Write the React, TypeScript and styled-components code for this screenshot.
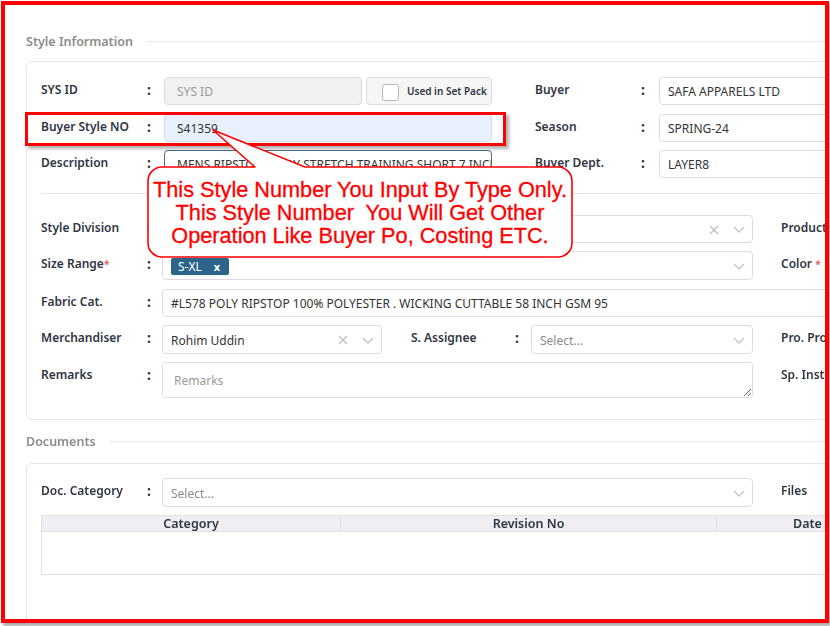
import React from "react";
import styled, { createGlobalStyle } from "styled-components";

const GlobalStyle = createGlobalStyle`
  html, body { margin: 0; padding: 0; background: #fff; }
  body { font-family: "Noto Sans", "Open Sans", sans-serif; color: #2f3542; }
  * { box-sizing: border-box; }
`;

const Screen = styled.div`
  width: 830px;
  height: 626px;
  padding: 1px 0 0 1px;
  background: #fff;
  overflow: hidden;
`;

const Frame = styled.div`
  position: relative;
  width: 828px;
  height: 622px;
  border: 4px solid #ff0000;
  box-shadow: 2px 3px 3px rgba(0, 0, 0, 0.35);
  overflow: hidden;
  background: #fff;
`;

const Content = styled.div`
  width: 1100px;
  padding: 27px 0 0 21px;
`;

const Legend = styled.div<{ $mt?: number }>`
  display: flex;
  align-items: center;
  gap: 14px;
  height: 18px;
  margin-top: ${(p) => p.$mt ?? 0}px;
  font-size: 12.5px;
  font-weight: 600;
  color: #8b8b8b;
  &::after {
    content: "";
    flex: 1;
    height: 1px;
    background: #e9e9e9;
  }
`;

const Card = styled.div<{ $mt: number; $pt: number; $pb: number }>`
  margin-top: ${(p) => p.$mt}px;
  border: 1px solid #e4e4e4;
  border-radius: 6px;
  padding: ${(p) => p.$pt}px 0 ${(p) => p.$pb}px 14px;
`;

const Rows = styled.div`
  display: flex;
  flex-direction: column;
  gap: 8px;
`;

const Row = styled.div<{ $h?: number }>`
  display: flex;
  align-items: flex-start;
  height: ${(p) => p.$h ?? 28}px;
`;

const Label = styled.div<{ $w?: number; $ml?: number }>`
  width: ${(p) => p.$w ?? 100}px;
  margin-left: ${(p) => p.$ml ?? 0}px;
  padding-top: 4px;
  font-size: 12px;
  font-weight: 600;
  line-height: 18px;
  color: #2f3542;
  white-space: nowrap;
  flex-shrink: 0;
`;

const Req = styled.span`
  color: #e05555;
  font-size: 10px;
  vertical-align: top;
`;

const Colon = styled.div<{ $mr: number }>`
  width: 16px;
  margin-right: ${(p) => p.$mr}px;
  padding-top: 4px;
  text-align: center;
  font-size: 14px;
  font-weight: 700;
  line-height: 18px;
  color: #333;
  flex-shrink: 0;
`;

const TextInput = styled.input<{ $w: number; $bg?: string; $bc?: string; $pl?: number }>`
  width: ${(p) => p.$w}px;
  height: 28px;
  flex-shrink: 0;
  border: 1px solid ${(p) => p.$bc ?? "#dcdcdc"};
  border-radius: 4px;
  background: ${(p) => p.$bg ?? "#fff"};
  padding: 1px 0 0 ${(p) => p.$pl ?? 8}px;
  font-family: "Noto Sans", sans-serif;
  font-size: 12px;
  color: #333;
  outline: none;
  &::placeholder { color: #9a9a9a; }
`;

const Remarks = styled.textarea`
  width: 591px;
  height: 36px;
  flex-shrink: 0;
  border: 1px solid #dcdcdc;
  border-radius: 4px;
  padding: 9px 11px;
  font-family: "Noto Sans", sans-serif;
  font-size: 12px;
  color: #333;
  resize: vertical;
  outline: none;
  &::placeholder { color: #9a9a9a; }
`;

const CheckBoxBox = styled.div`
  width: 126px;
  height: 28px;
  margin-left: 4px;
  flex-shrink: 0;
  display: flex;
  align-items: center;
  gap: 8px;
  padding-left: 15px;
  border: 1px solid #dcdcdc;
  border-radius: 4px;
  background: #f6f6f6;
  font-size: 10px;
  font-weight: 600;
  color: #2f3542;
  white-space: nowrap;
`;

const Check = styled.span`
  width: 17px;
  height: 17px;
  margin-top: 2px;
  border: 1px solid #b8b8b8;
  border-radius: 3px;
  background: #fff;
`;

const Select = styled.div<{ $w: number; $h?: number }>`
  width: ${(p) => p.$w}px;
  height: ${(p) => p.$h ?? 28}px;
  flex-shrink: 0;
  display: flex;
  align-items: center;
  padding: 1px 0 0 8px;
  border: 1px solid #dcdcdc;
  border-radius: 4px;
  background: #fff;
  font-size: 12px;
`;

const SelectValue = styled.div<{ $ph?: boolean }>`
  flex: 1;
  color: ${(p) => (p.$ph ? "#8a8a8a" : "#333")};
  white-space: nowrap;
  overflow: hidden;
`;

const Indicators = styled.div`
  display: flex;
  align-items: center;
  gap: 14px;
  padding-right: 7px;
  color: #c4c4c4;
`;

const Tag = styled.span`
  display: inline-flex;
  align-items: center;
  gap: 12px;
  height: 17px;
  padding: 0 9px 0 7px;
  border-radius: 2px;
  background: #2c6589;
  color: #fff;
  font-size: 12px;
  line-height: 17px;
  b { font-size: 11px; font-weight: 700; }
`;

const Divider = styled.div`
  height: 1px;
  background: #e8e8e8;
  margin: 15px 0 21px;
`;

const Table = styled.div`
  margin-top: 8px;
  border: 1px solid #e2e2e2;
  border-right: none;
`;

const THead = styled.div`
  display: flex;
  height: 16px;
  background: #efeff3;
  border-bottom: 1px solid #e2e2e2;
`;

const Th = styled.div<{ $w: number }>`
  width: ${(p) => p.$w}px;
  text-align: center;
  font-size: 12.5px;
  font-weight: 600;
  line-height: 16px;
  color: #2f3542;
  & + & { border-left: 1px solid #e2e2e2; }
`;

const TBody = styled.div`
  height: 42px;
`;

const Spacer = styled.div`
  height: 60px;
`;

const RedBox = styled.div`
  position: absolute;
  left: 20px;
  top: 107px;
  width: 481px;
  height: 34px;
  border: 3px solid #ff0000;
  box-shadow: 3px 3px 3px rgba(0, 0, 0, 0.3);
  pointer-events: none;
`;

const Callout = styled.div`
  position: absolute;
  left: 140px;
  top: 120px;
  width: 432px;
  height: 136px;
`;

const CalloutShape = styled.svg`
  position: absolute;
  inset: 0;
`;

const CalloutText = styled.div`
  position: absolute;
  left: 3px;
  top: 42px;
  width: 424px;
  height: 90px;
  display: flex;
  align-items: center;
  justify-content: center;
  text-align: center;
  white-space: pre;
  font-family: "Liberation Sans", Arial, sans-serif;
  font-size: 21.7px;
  font-weight: 400;
  line-height: 23px;
  color: #ff0000;
  -webkit-text-stroke: 0.3px #ff0000;
`;

const ClearIcon = () => (
  <svg width="10" height="10" viewBox="0 0 10 10">
    <path d="M1 1L9 9M9 1L1 9" stroke="currentColor" strokeWidth="1.6" fill="none" />
  </svg>
);

const Chevron = () => (
  <svg width="12" height="7" viewBox="0 0 12 7">
    <path d="M1 1L6 6L11 1" stroke="currentColor" strokeWidth="1.4" fill="none" />
  </svg>
);

export default function App() {
  return (
    <>
      <GlobalStyle />
      <Screen>
        <Frame>
          <Content>
            <Legend>Style Information</Legend>
            <Card $mt={11} $pt={15} $pb={21}>
              <Rows>
                <Row $h={29}>
                  <Label>SYS ID</Label>
                  <Colon $mr={7}>:</Colon>
                  <TextInput $w={198} $bg="#f1f1f1" $pl={12} placeholder="SYS ID" readOnly />
                  <CheckBoxBox>
                    <Check />
                    Used in Set Pack
                  </CheckBoxBox>
                  <Label $ml={43}>Buyer</Label>
                  <Colon $mr={8}>:</Colon>
                  <TextInput $w={260} defaultValue="SAFA APPARELS LTD" readOnly />
                </Row>
                <Row>
                  <Label>Buyer Style NO</Label>
                  <Colon $mr={7}>:</Colon>
                  <TextInput $w={328} $bg="#e8f0fe" $bc="#d3dcea" $pl={12} defaultValue="S41359" readOnly />
                  <Label $ml={43}>Season</Label>
                  <Colon $mr={8}>:</Colon>
                  <TextInput $w={260} defaultValue="SPRING-24" readOnly />
                </Row>
                <Row>
                  <Label>Description</Label>
                  <Colon $mr={7}>:</Colon>
                  <TextInput
                    $w={328}
                    $bc="#4f6b80"
                    $pl={12}
                    defaultValue="MENS RIPSTOP 4-WAY STRETCH TRAINING SHORT 7 INCH"
                    readOnly
                  />
                  <Label $ml={43}>Buyer Dept.</Label>
                  <Colon $mr={8}>:</Colon>
                  <TextInput $w={260} defaultValue="LAYER8" readOnly />
                </Row>
              </Rows>
              <Divider />
              <Rows>
                <Row>
                  <Label>Style Division</Label>
                  <Colon $mr={5}>:</Colon>
                  <Select $w={591}>
                    <SelectValue>MENS</SelectValue>
                    <Indicators>
                      <ClearIcon />
                      <Chevron />
                    </Indicators>
                  </Select>
                  <Label $ml={28}>Product Type</Label>
                </Row>
                <Row $h={30}>
                  <Label>
                    Size Range<Req>*</Req>
                  </Label>
                  <Colon $mr={5}>:</Colon>
                  <Select $w={591} $h={29}>
                    <SelectValue>
                      <Tag>
                        S-XL <b>x</b>
                      </Tag>
                    </SelectValue>
                    <Indicators>
                      <Chevron />
                    </Indicators>
                  </Select>
                  <Label $ml={28}>
                    Color <Req>*</Req>
                  </Label>
                </Row>
                <Row>
                  <Label>Fabric Cat.</Label>
                  <Colon $mr={5}>:</Colon>
                  <TextInput
                    $w={760}
                    defaultValue="#L578 POLY RIPSTOP 100% POLYESTER . WICKING CUTTABLE 58 INCH GSM 95"
                    readOnly
                  />
                </Row>
                <Row $h={29}>
                  <Label>Merchandiser</Label>
                  <Colon $mr={5}>:</Colon>
                  <Select $w={220} $h={29}>
                    <SelectValue>Rohim Uddin</SelectValue>
                    <Indicators>
                      <ClearIcon />
                      <Chevron />
                    </Indicators>
                  </Select>
                  <Label $ml={29} $w={98}>S. Assignee</Label>
                  <Colon $mr={6}>:</Colon>
                  <Select $w={222} $h={29}>
                    <SelectValue $ph>Select...</SelectValue>
                    <Indicators>
                      <Chevron />
                    </Indicators>
                  </Select>
                  <Label $ml={28}>Pro. Process</Label>
                </Row>
                <Row $h={36}>
                  <Label>Remarks</Label>
                  <Colon $mr={5}>:</Colon>
                  <Remarks placeholder="Remarks" />
                  <Label $ml={28}>Sp. Instruction</Label>
                </Row>
              </Rows>
            </Card>
            <Legend $mt={12}>Documents</Legend>
            <Card $mt={13} $pt={14} $pb={0}>
              <Row $h={29}>
                <Label>Doc. Category</Label>
                <Colon $mr={5}>:</Colon>
                <Select $w={591} $h={29}>
                  <SelectValue $ph>Select...</SelectValue>
                  <Indicators>
                    <Chevron />
                  </Indicators>
                </Select>
                <Label $ml={28}>Files</Label>
              </Row>
              <Table>
                <THead>
                  <Th $w={298}>Category</Th>
                  <Th $w={376}>Revision No</Th>
                  <Th $w={182}>Date</Th>
                  <Th $w={200}>File</Th>
                </THead>
                <TBody />
              </Table>
              <Spacer />
            </Card>
          </Content>

          <RedBox />
          <Callout>
            <CalloutShape width="432" height="136" viewBox="0 0 432 136">
              <path
                d="M17 42 H110 L68 5 L160 42 H413 A14 14 0 0 1 427 56 V118 A14 14 0 0 1 413 132 H17 A14 14 0 0 1 3 118 V56 A14 14 0 0 1 17 42 Z"
                fill="#fff"
                stroke="#ff0000"
                strokeWidth="1.6"
                strokeLinejoin="round"
              />
            </CalloutShape>
            <CalloutText>
              {"This Style Number You Input By Type Only.\nThis Style Number  You Will Get Other\nOperation Like Buyer Po, Costing ETC."}
            </CalloutText>
          </Callout>
        </Frame>
      </Screen>
    </>
  );
}
